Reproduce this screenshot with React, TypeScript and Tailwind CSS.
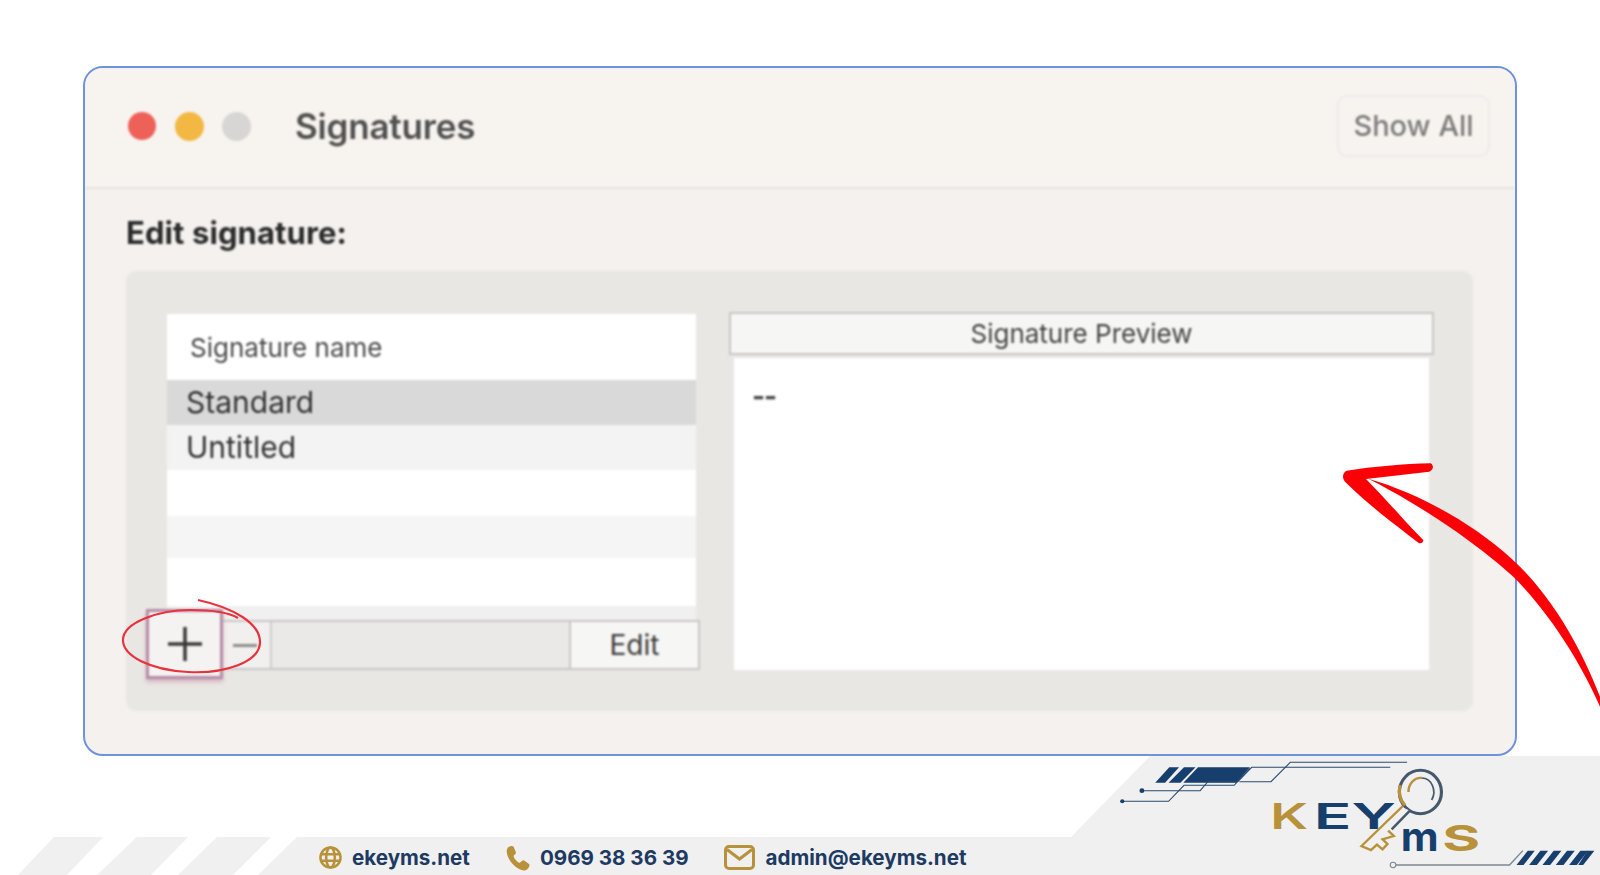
import React from "react";

const font = { fontFamily: "Inter, 'Liberation Sans', sans-serif" };

function Contact({ icon, text, gap }: { icon: React.ReactNode; text: string; gap: string }) {
  return (
    <div className={`flex items-center ${gap}`}>
      {icon}
      <span className="text-[20.6px] leading-[26px] font-bold text-[#1d3a63]">{text}</span>
    </div>
  );
}

export default function App() {
  return (
    <div className="relative w-[1600px] h-[875px] overflow-hidden bg-white flex flex-col" style={font}>
      <div className="pt-[66px] pl-[83px]">
        <div className="w-[1434px] h-[690px] rounded-[20px] border-2 border-[#6f92dc] bg-[#f4f1ee] overflow-hidden">
          <div className="blur-[0.8px]">
            <div className="h-[121px] bg-[#f7f3ef] border-b-2 border-[#e6e3e0] flex items-center pl-[43px] pr-[25px] pb-[3px]">
              <div className="w-[28px] h-[28px] rounded-full bg-[#ee6158]" />
              <div className="w-[29px] h-[29px] rounded-full bg-[#f2b843] ml-[19px]" />
              <div className="w-[29px] h-[29px] rounded-full bg-[#d8d6d4] ml-[18px]" />
              <div className="ml-[44px] text-[35px] font-semibold tracking-[-0.2px] text-[#505050]">Signatures</div>
              <div className="ml-auto w-[153px] h-[62px] rounded-[10px] border-2 border-[#efebe8] flex items-center justify-center text-[29px] text-[#7c7c7c] font-medium">
                Show All
              </div>
            </div>
            <div className="pl-[41px] pt-[23px]">
              <div className="h-[42px] leading-[42px] text-[31px] font-bold tracking-[0.1px] text-[#2b2b2b]">Edit signature:</div>
              <div className="mt-[17px] w-[1347px] h-[440px] rounded-[10px] bg-[#e9e7e4] pl-[41px] pt-[41px] flex">
                <div className="w-[531px] pt-[2px]">
                  <div className="h-[306px] bg-white flex flex-col mr-[2px]">
                    <div className="h-[66px] pl-[23px] flex items-center text-[26px] text-[#4a4a4a]">Signature name</div>
                    <div className="h-[45px] pl-[19px] flex items-center bg-[#d9d9d9] text-[30px] text-[#333333]">Standard</div>
                    <div className="h-[45px] pl-[19px] flex items-center bg-[#f3f3f3] text-[30px] text-[#333333]">Untitled</div>
                    <div className="h-[46px] bg-white" />
                    <div className="h-[42px] bg-[#f5f5f5]" />
                    <div className="h-[48px] bg-white" />
                    <div className="h-[14px] bg-[#f0f0f0]" />
                  </div>
                  <div className="relative h-[50px] flex border-y-2 border-[#c9c7c5] bg-[#ebe9e7] mr-[-2px]">
                    <div className="w-[105px] border-r-2 border-[#cfcdcb] bg-[#f2f0ee] flex items-center justify-end pr-[13px]">
                      <div className="w-[24px] h-[3px] bg-[#8c8c8c]" />
                    </div>
                    <div className="flex-1" />
                    <div className="w-[131px] border-x-2 border-[#c9c7c5] bg-[#f6f6f5] flex items-center justify-center text-[28px] text-[#3c3c3c]">
                      Edit
                    </div>
                    <div className="absolute left-[-21px] top-[-13px] w-[77px] h-[70px] border-[3px] border-[#b58ca6] bg-[#f5f3f2] shadow-[0_3px_4px_rgba(190,120,150,0.45)] flex items-center justify-center">
                      <svg width="38" height="38" viewBox="0 0 38 38">
                        <path d="M2 19H36M19 2V36" stroke="#383838" strokeWidth="3.5" fill="none" />
                      </svg>
                    </div>
                  </div>
                </div>
                <div className="ml-[31px] w-[705px] flex flex-col">
                  <div className="h-[43px] border-2 border-[#c9c7c5] bg-[#f6f6f5] flex items-center justify-center text-[26px] text-[#444444]">
                    Signature Preview
                  </div>
                  <div className="mx-[5px] mt-[3px] h-[312px] bg-white pl-[18px] pt-[18px] text-[28px] leading-[40px] font-bold tracking-[-1px] text-[#444444]">
                    --
                  </div>
                </div>
              </div>
            </div>
          </div>
        </div>
      </div>

      <div className="relative flex-1">
        <svg className="absolute inset-0" width="1600" height="119" viewBox="0 3 1600 119">
          <polygon points="1150,3 1600,3 1600,122 258,122 297,84 1071,84" fill="#f0f0f0" />
          <polygon points="54,84 103,84 67,122 18,122" fill="#f0f0f0" />
          <polygon points="137,84 188,84 151,122 97,122" fill="#f0f0f0" />
          <polygon points="217,84 271,84 233,122 178,122" fill="#f0f0f0" />
        </svg>
        <svg
          className="absolute left-[1050px] top-[-16px]"
          width="550"
          height="135"
          viewBox="0 0 1568 405"
          preserveAspectRatio="none"
        >
          <g fill="#173f6e">
            <polygon points="340,82 368,82 328,128 300,128" />
            <polygon points="382,82 415,82 372,128 338,128" />
            <polygon points="422,82 570,82 532,128 380,128" />
          </g>
          <g fill="none" stroke="#2b4a70" strokeWidth="3">
            <polyline points="262,152 428,152 450,125 535,125 575,82 970,82" />
            <polyline points="206,184 338,184 382,136 525,136 570,85" />
            <polyline points="540,125 630,125 685,67 1018,67" />
          </g>
          <circle cx="262" cy="152" r="7" fill="#173f6e" />
          <circle cx="206" cy="184" r="6" fill="#173f6e" />
          <text x="628" y="268" fontSize="108" fontWeight="600" fill="#b8923a" textLength="108" lengthAdjust="spacingAndGlyphs" fontFamily="Inter, sans-serif">K</text>
          <text x="752" y="268" fontSize="108" fontWeight="600" fill="#173f6e" textLength="234" lengthAdjust="spacingAndGlyphs" fontFamily="Inter, sans-serif">EY</text>
          <text x="1000" y="332" fontSize="120" fontWeight="700" fill="#173f6e" textLength="108" lengthAdjust="spacingAndGlyphs" fontFamily="Inter, sans-serif">m</text>
          <text x="1118" y="332" fontSize="108" fontWeight="700" fill="#b8923a" textLength="108" lengthAdjust="spacingAndGlyphs" fontFamily="Inter, sans-serif">S</text>
          <ellipse cx="1056" cy="156" rx="60" ry="65" fill="#f0f0f0" stroke="#45586e" strokeWidth="9" />
          <path d="M1012 196 A60 65 0 0 1 998 135" fill="none" stroke="#b8923a" strokeWidth="9" />
          <path d="M1022 156 A34 42 0 0 1 1060 114" fill="none" stroke="#b8923a" strokeWidth="7" />
          <path d="M1060 114 A34 42 0 0 1 1088 180" fill="none" stroke="#45586e" strokeWidth="5" />
          <polygon points="1002,200 1026,212 925,322 890,322" fill="#f0f0f0" />
          <polyline points="1006,198 888,318 915,330 932,314 948,328 962,312 948,298 980,288 964,272" fill="none" stroke="#b8923a" strokeWidth="7" />
          <polyline points="1026,212 974,268" fill="none" stroke="#45586e" strokeWidth="7" />
          <circle cx="978" cy="375" r="8" fill="#f0f0f0" stroke="#7c8794" strokeWidth="3" />
          <polyline points="986,375 1310,375 1348,332" fill="none" stroke="#7c8794" strokeWidth="4" />
          <g fill="#173f6e">
            <polygon points="1362,332 1382,332 1350,375 1330,375" />
            <polygon points="1398,332 1420,332 1388,375 1366,375" />
            <polygon points="1436,332 1458,332 1426,375 1404,375" />
            <polygon points="1474,332 1496,332 1464,375 1442,375" />
            <polygon points="1512,332 1534,332 1502,375 1480,375" />
            <polygon points="1532,332 1552,332 1520,375 1506,375" />
          </g>
        </svg>
        <div className="relative pl-[319px] pt-[84px] flex items-center h-[119px]">
          <Contact
            gap="gap-[10px]"
            text="ekeyms.net"
            icon={
              <svg width="23" height="23" viewBox="0 0 24 24" fill="none" stroke="#b8923a" strokeWidth="2.6">
                <circle cx="12" cy="12" r="10.5" />
                <ellipse cx="12" cy="12" rx="4.5" ry="10.5" />
                <path d="M2 8.5H22M2 15.5H22" />
              </svg>
            }
          />
          <div className="ml-[36px]">
            <Contact
              gap="gap-[10px]"
              text="0969 38 36 39"
              icon={
                <svg width="24" height="26" viewBox="0 0 24 26" fill="#b8923a">
                  <path d="M2 2.5 C3.5 1 6.5 .5 7.5 1.5 L10 7.5 C10.3 8.6 8 10 7.5 11 C8.5 14 10.5 16.5 13.5 18 L16.5 15.5 C17.2 15 18 15.2 23 19 C24 20 23.5 22.5 21 24.5 C19 26 16 25.5 13 24 C6 20.5 1.5 13 .8 7.5 C.5 5.5 1 3.5 2 2.5Z" />
                </svg>
              }
            />
          </div>
          <div className="ml-[35px]">
            <Contact
              gap="gap-[11px]"
              text="admin@ekeyms.net"
              icon={
                <svg width="31" height="25" viewBox="0 0 31 25" fill="none" stroke="#b8923a" strokeWidth="3">
                  <rect x="1.5" y="1.5" width="28" height="22" rx="3.5" />
                  <path d="M3 4.5 L15.5 14 L28 4.5" />
                </svg>
              }
            />
          </div>
        </div>
      </div>

      <svg className="absolute left-[1280px] top-[440px]" width="320" height="320" viewBox="0 0 960 960">
        <path
          fill="#fb0007"
          d="M452 70 C462 76 461 90 448 95 L258 117 C320 180 380 250 430 300 C430 310 420 312 415 308 C340 250 260 190 195 125 C185 112 188 98 200 92 C280 80 370 72 452 70 Z"
        />
        <path
          fill="#fb0007"
          d="M265 116 C420 160 600 260 720 380 C830 490 910 640 960 770 L960 800 C890 640 790 500 700 410 C590 310 430 200 265 116 Z"
        />
      </svg>
      <svg className="absolute left-[110px] top-[590px]" width="170" height="100" viewBox="0 0 170 100" fill="none">
        <path
          d="M88 10 C125 18 150 34 150 52 C150 72 115 84 78 82 C40 80 13 66 13 50 C13 32 50 20 80 20 C100 20 118 22 128 28"
          stroke="#e8323c"
          strokeWidth="2.2"
        />
      </svg>
    </div>
  );
}
